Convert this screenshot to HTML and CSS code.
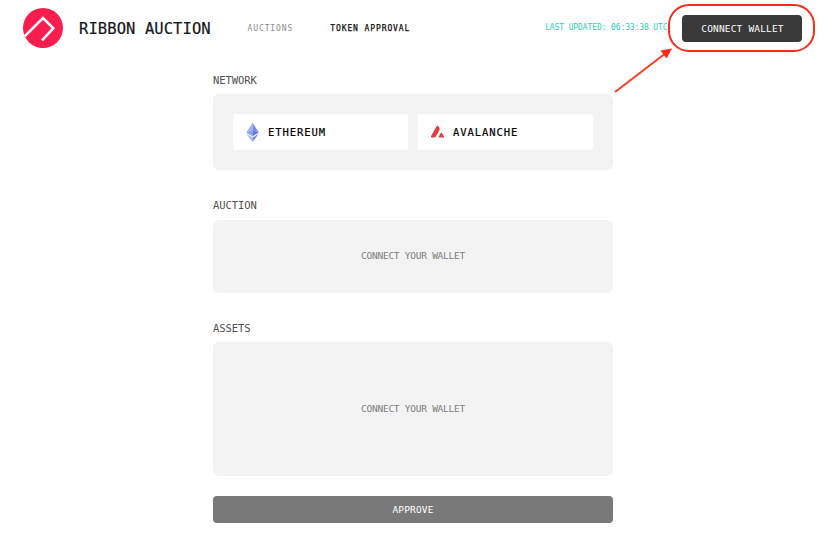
FILE: index.html
```html
<!DOCTYPE html>
<html lang="en">
<head>
<meta charset="utf-8">
<title>Ribbon Auction</title>
<link rel="stylesheet" href="styles.css">
</head>
<body>
<header class="header">
  <svg class="logo" viewBox="0 0 40 40"><circle cx="20" cy="20" r="20" fill="#fc1d4f"/><path d="M1.8 28.2 20 10.2 30.3 20.4 19 32.3" fill="none" stroke="#fff" stroke-width="2.6"/></svg>
  <h1 class="brand">RIBBON AUCTION</h1>
  <nav class="nav">
    <a class="link">AUCTIONS</a>
    <a class="link active">TOKEN APPROVAL</a>
  </nav>
  <span class="updated">LAST UPDATED: 06:33:38 UTC</span>
  <button class="connect">CONNECT WALLET</button>
</header>
<main class="main">
  <h2 class="label">NETWORK</h2>
  <section class="panel networks">
    <button class="network">
      <svg class="icon" viewBox="0 0 14 20"><path d="M6.5 .8.2 10.5 6.5 7.8z" fill="#a4b5f2"/><path d="M6.5 .8 12.8 10.5 6.5 7.8z" fill="#768be5"/><path d="M6.5 7.8.2 10.5 6.5 14.2z" fill="#8ea1ee"/><path d="M6.5 7.8 12.8 10.5 6.5 14.2z" fill="#6079e0"/><path d="M.2 11.8 6.5 15.5V20z" fill="#a4b5f2"/><path d="M12.8 11.8 6.5 15.5V20z" fill="#738aea"/></svg>
      ETHEREUM
    </button>
    <button class="network">
      <svg class="icon" viewBox="0 0 14 20"><path d="M5.2 4.9Q6.4 3 7.6 4.6L8.5 6.2Q9 7.1 8.5 8L4.8 14.5Q4.1 15.6 3 15.6H.8Q-.8 15.6.1 14z" fill="#e13c40"/><path d="M9.6 11.2Q10.4 9.9 11.1 11.2L13 14.4Q13.6 15.6 12.4 15.6H8.4Q7.1 15.6 7.8 14.4z" fill="#e13c40"/></svg>
      AVALANCHE
    </button>
  </section>
  <h2 class="label">AUCTION</h2>
  <section class="panel auction">CONNECT YOUR WALLET</section>
  <h2 class="label">ASSETS</h2>
  <section class="panel assets">CONNECT YOUR WALLET</section>
  <button class="approve">APPROVE</button>
</main>
<svg class="annotation" viewBox="0 0 827 538"><rect x="669" y="5" width="145" height="46" rx="20" fill="none" stroke="#fa2b18" stroke-width="2"/><path d="M615 92 664 54.5" stroke="#fa3d27" stroke-width="2"/><path d="M672 48.5 660.5 50.5 666.5 58.5z" fill="#fa2b18"/></svg>
</body>
</html>
```
FILE: styles.css
```css
* { box-sizing: border-box; }
body {
  margin: 0;
  height: 538px;
  overflow: hidden;
  background: #fff;
  font-family: "DejaVu Sans Mono", monospace;
}
h1, h2 { margin: 0; font-weight: 400; }
button { border: 0; padding: 0; font-family: inherit; }
.header {
  display: flex;
  align-items: center;
  height: 56px;
  padding: 0 25px 0 23px;
  white-space: nowrap;
}
.logo { width: 40px; height: 40px; flex: none; }
.brand {
  width: 132.5px;
  margin-left: 16px;
  padding-top: 2px;
  font-size: 15.5px;
  line-height: 20px;
  letter-spacing: .08px;
  color: #15191d;
  -webkit-text-stroke: .2px #15191d;
}
.nav { display: flex; gap: 37px; margin-left: 36px; padding-top: 2px; }
.link { font-size: 8px; line-height: 12px; letter-spacing: .9px; color: #8c8c8c; }
.active { color: #111; -webkit-text-stroke: .25px #111; }
.updated {
  margin-left: auto;
  font-size: 8px;
  line-height: 12px;
  letter-spacing: -.11px;
  color: #36cdb8;
}
.connect {
  width: 120px;
  height: 27px;
  margin-left: 14.5px;
  padding: 1px 0 0 1px;
  border-radius: 4px;
  background: #393939;
  color: #fff;
  font-size: 9.5px;
  letter-spacing: .17px;
}
.main { width: 400px; margin: 16px 0 0 213px; }
.label {
  height: 22px;
  font-size: 10.5px;
  line-height: 16px;
  letter-spacing: -.07px;
  color: #505050;
}
.panel {
  display: flex;
  align-items: center;
  justify-content: center;
  border-radius: 6px;
  background: #f3f3f3;
  color: #7d7d7d;
  font-size: 9.5px;
  letter-spacing: -.25px;
}
.networks { gap: 10px; height: 76px; padding: 20px; margin-bottom: 27px; }
.network {
  display: flex;
  flex: 1;
  align-items: center;
  gap: 8px;
  height: 36px;
  padding-left: 13px;
  border-radius: 2px;
  background: #fff;
  color: #000;
  font-size: 10.5px;
  letter-spacing: .92px;
  -webkit-text-stroke: .2px #000;
}
.icon { width: 14px; height: 20px; overflow: visible; }
.icon path { stroke: none; }
.auction { height: 73px; padding-bottom: 2px; margin: 1px 0 27px; }
.assets { height: 134px; padding-bottom: 1px; }
.approve {
  display: block;
  width: 400px;
  height: 27px;
  margin-top: 20px;
  border-radius: 4px;
  background: #797979;
  color: #fff;
  font-size: 9.5px;
  letter-spacing: .15px;
}
.annotation { position: absolute; inset: 0; width: 827px; height: 538px; pointer-events: none; }
```
